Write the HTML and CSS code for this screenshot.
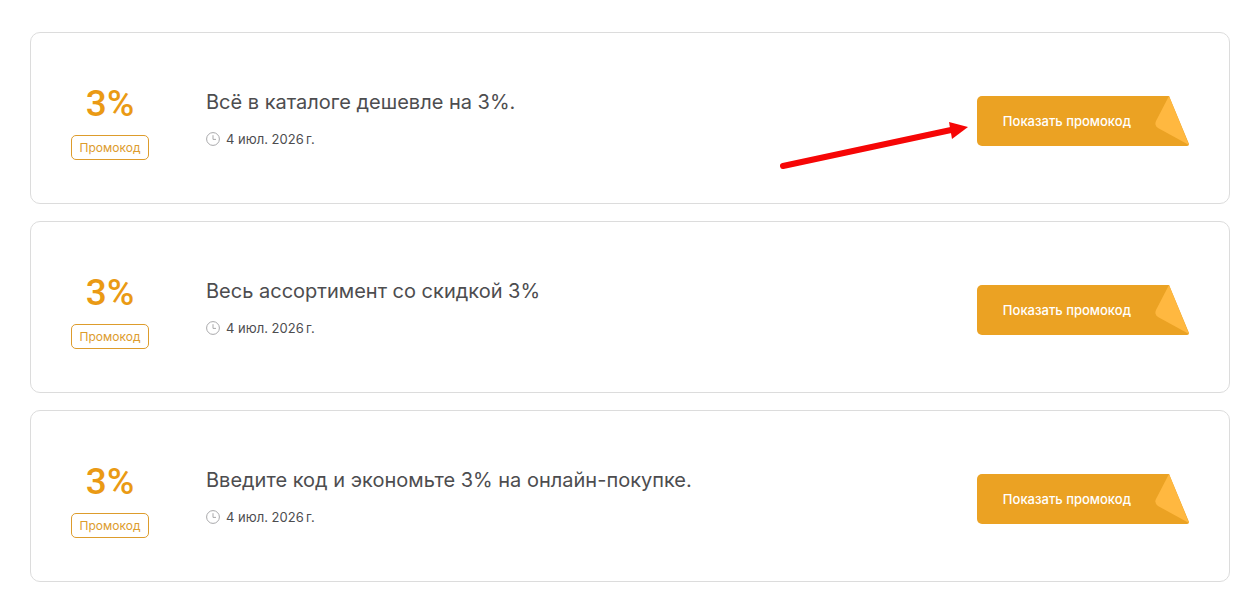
FILE: index.html
```html
<!DOCTYPE html>
<html lang="ru">
<head>
<meta charset="utf-8">
<meta name="viewport" content="width=device-width, initial-scale=1">
<title>Промокоды</title>
<link rel="stylesheet" href="styles.css">
</head>
<body>
<main class="offers">
  <article class="offer">
    <div class="discount">
      <span class="discount-value">3%</span>
      <span class="discount-tag">Промокод</span>
    </div>
    <div class="details">
      <h2 class="title">Всё в каталоге дешевле на 3%.</h2>
      <p class="expires">
        <svg class="clock" viewBox="0 0 14 14" aria-hidden="true"><circle cx="7" cy="7" r="6.4"/><path d="M7 3.2V7.4H10"/></svg>
        <time datetime="2026-07-04">4 июл. 2026&#8201;г.</time>
      </p>
    </div>
    <button class="reveal" type="button">
      <span class="reveal-label">Показать промокод</span>
      <svg class="fold" viewBox="0 0 36 50" aria-hidden="true"><path class="fold-base" d="M0 0H16L36 48Q36 50 34 50H0Z"/><path class="fold-flap" d="M16 0L3 25Q1 29 5 32L36 49Z"/></svg>
    </button>
    <svg class="pointer" viewBox="0 0 190 50" aria-hidden="true"><path class="pointer-line" d="M4 46L172 10"/><path class="pointer-head" d="M170 2L189 7L173 19Z"/></svg>
  </article>
  <article class="offer">
    <div class="discount">
      <span class="discount-value">3%</span>
      <span class="discount-tag">Промокод</span>
    </div>
    <div class="details">
      <h2 class="title">Весь ассортимент со скидкой 3%</h2>
      <p class="expires">
        <svg class="clock" viewBox="0 0 14 14" aria-hidden="true"><circle cx="7" cy="7" r="6.4"/><path d="M7 3.2V7.4H10"/></svg>
        <time datetime="2026-07-04">4 июл. 2026&#8201;г.</time>
      </p>
    </div>
    <button class="reveal" type="button">
      <span class="reveal-label">Показать промокод</span>
      <svg class="fold" viewBox="0 0 36 50" aria-hidden="true"><path class="fold-base" d="M0 0H16L36 48Q36 50 34 50H0Z"/><path class="fold-flap" d="M16 0L3 25Q1 29 5 32L36 49Z"/></svg>
    </button>
  </article>
  <article class="offer">
    <div class="discount">
      <span class="discount-value">3%</span>
      <span class="discount-tag">Промокод</span>
    </div>
    <div class="details">
      <h2 class="title">Введите код и экономьте 3% на онлайн-покупке.</h2>
      <p class="expires">
        <svg class="clock" viewBox="0 0 14 14" aria-hidden="true"><circle cx="7" cy="7" r="6.4"/><path d="M7 3.2V7.4H10"/></svg>
        <time datetime="2026-07-04">4 июл. 2026&#8201;г.</time>
      </p>
    </div>
    <button class="reveal" type="button">
      <span class="reveal-label">Показать промокод</span>
      <svg class="fold" viewBox="0 0 36 50" aria-hidden="true"><path class="fold-base" d="M0 0H16L36 48Q36 50 34 50H0Z"/><path class="fold-flap" d="M16 0L3 25Q1 29 5 32L36 49Z"/></svg>
    </button>
  </article>
</main>
</body>
</html>
```
FILE: styles.css
```css
* { box-sizing: border-box; }

body {
  margin: 0;
  background: #fff;
  color: #4d4d4f;
  font-family: Inter, "Liberation Sans", sans-serif;
}

.offers {
  display: flex;
  flex-direction: column;
  gap: 17px;
  padding: 32px 10px 12px 30px;
}

.offer {
  position: relative;
  display: flex;
  align-items: flex-start;
  padding: 50px 40px 43px;
  border: 1px solid #dcdcdc;
  border-radius: 10px;
}

.discount {
  display: flex;
  flex-direction: column;
  align-items: center;
  width: 78px;
  margin-right: 57px;
}

.discount-value {
  color: #ea9a14;
  font-family: Roboto, "Liberation Sans", sans-serif;
  font-size: 37px;
  font-weight: 500;
  line-height: 42px;
  margin-bottom: 10px;
}

.discount-tag {
  padding: 0 8px;
  border: 1px solid #dd9c2c;
  border-radius: 5px;
  color: #dd9c2c;
  font-size: 12px;
  line-height: 23px;
}

.details {
  flex: 1;
  padding-top: 6px;
}

.title {
  margin: 0 0 12px;
  font-size: 20px;
  font-weight: 400;
  line-height: 26px;
}

.expires {
  display: flex;
  align-items: center;
  gap: 6px;
  margin: 0;
  font-size: 13px;
  line-height: 24px;
}

.clock {
  width: 14px;
  height: 14px;
  fill: none;
  stroke: #a9a9ab;
}

.reveal {
  display: flex;
  align-items: center;
  height: 50px;
  margin-top: 13px;
  padding: 0;
  border: 0;
  background: none;
  color: #fff;
  font: 500 13px/50px Inter, "Liberation Sans", sans-serif;
  cursor: pointer;
}

.reveal-label {
  padding: 0 22px 0 26px;
  border-radius: 5px 0 0 5px;
  background: #eba223;
}

.fold {
  width: 36px;
  height: 50px;
}

.fold-base { fill: #eba223; }
.fold-flap { fill: #ffb840; }

.pointer {
  position: absolute;
  top: 87px;
  right: 260px;
  width: 190px;
  height: 50px;
}

.pointer-line {
  fill: none;
  stroke: #f60606;
  stroke-width: 6;
  stroke-linecap: round;
}

.pointer-head { fill: #f60606; }
```
